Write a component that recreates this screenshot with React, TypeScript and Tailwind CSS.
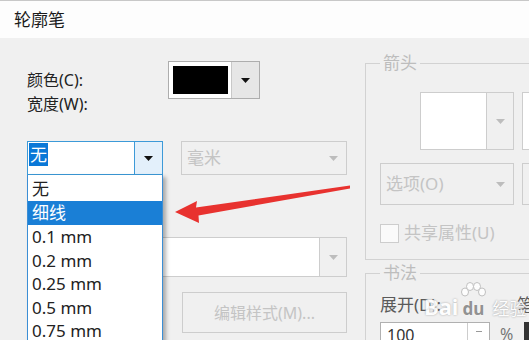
import React from 'react';

const font = '"Noto Sans", "Noto Sans CJK SC", sans-serif';

const Caret = ({ color }: { color: string }) => (
  <svg width="9" height="5" viewBox="0 0 9 5">
    <path d="M0 0h9L4.5 5z" fill={color} />
  </svg>
);

const widths = ['0.1 mm', '0.2 mm', '0.25 mm', '0.5 mm', '0.75 mm'];

function DisabledCombo({ label, className }: { label?: string; className: string }) {
  return (
    <div className={`flex items-center border border-[#cdcdcd] bg-[#f0f0f0] ${className}`}>
      <span className="flex-1 pl-[5px] text-[17px] text-[#c4c4c4]">{label}</span>
      <div className="flex w-[26px] justify-center">
        <Caret color="#bdbdbd" />
      </div>
    </div>
  );
}

function WhiteCombo({ className }: { className: string }) {
  return (
    <div className={`flex border border-[#cdcdcd] bg-white ${className}`}>
      <div className="flex-1" />
      <div className="flex w-[27px] items-center justify-center border-l border-[#cdcdcd] bg-[#f0f0f0]">
        <Caret color="#bdbdbd" />
      </div>
    </div>
  );
}

export default function App() {
  return (
    <div
      className="relative h-[340px] w-[529px] overflow-hidden bg-[#f0f0f0] text-[#222]"
      style={{ fontFamily: font }}
    >
      <div className="flex h-[38px] items-center border-t border-[#c8c8c8] bg-[#fdfdfd] pl-[14px] text-[17px] text-[#1a1a1a]">
        轮廓笔
      </div>

      <div className="flex pl-[27px] pt-[23px]">
        {/* left column */}
        <div className="w-[320px] shrink-0">
          <div className="flex h-[38px] items-center">
            <span className="w-[141px] text-[16px]">颜色(C):</span>
            <div className="flex h-[38px] w-[92px] border border-[#adadad] bg-white">
              <div className="flex-1 p-[4px] pr-[3px]">
                <div className="h-full w-full bg-black" />
              </div>
              <div className="flex w-[28px] items-center justify-center border-l border-[#c8c8c8] bg-[#e6e6e6]">
                <Caret color="#111" />
              </div>
            </div>
          </div>
          <div className="mt-[-6px] text-[16px] leading-[22px]">宽度(W):</div>

          <div className="mt-[26px] flex h-[34px] items-stretch gap-[18px]">
            <div className="relative w-[136px]">
              <div className="flex h-full border border-[#3c9ad8] bg-white">
                <div className="flex-1 p-[1px]">
                  <span className="inline-block h-[23px] bg-[#0a78d7] px-[1px] text-[17px] leading-[23px] text-white">
                    无
                  </span>
                </div>
                <div className="flex w-[28px] items-center justify-center border-l border-[#3c9ad8] bg-[#e3f0fb]">
                  <Caret color="#111" />
                </div>
              </div>
              {/* open list */}
              <div className="absolute left-0 top-full z-10 h-[180px] w-[136px] border-x border-[#3b8ed5] bg-white pt-[1px] text-[17px] shadow-[3px_2px_4px_rgba(0,0,0,0.3)]">
                <div className="h-[25px] pl-[4px] leading-[25px]">无</div>
                <div className="h-[24px] bg-[#1a7fd6] pl-[4px] leading-[24px] text-white">细线</div>
                {widths.map((w) => (
                  <div key={w} className="h-[23.5px] pl-[4px] leading-[23.5px]">
                    {w}
                  </div>
                ))}
              </div>
            </div>
            <DisabledCombo label="毫米" className="w-[166px]" />
          </div>

          <WhiteCombo className="mt-[62px] h-[40px] w-[320px]" />

          <div className="ml-[155px] mt-[15px] flex h-[41px] w-[165px] items-center justify-center border border-[#cdcdcd] text-[16px] text-[#c4c4c4]">
            编辑样式(M)...
          </div>
        </div>

        {/* right column */}
        <div className="-mt-[8px] ml-[18px] w-[200px] shrink-0">
          <fieldset className="border border-[#d2d2d2] pb-[16px] pl-[14px]">
            <legend className="px-[3px] text-[17px] leading-[20px] text-[#bdbdbd]">箭头</legend>
            <div className="ml-[40px] mt-[19px] flex h-[58px] gap-[8px]">
              <WhiteCombo className="h-full w-[94px]" />
              <div className="h-full w-[60px] border border-[#cdcdcd] bg-white" />
            </div>
            <div className="mt-[13px] flex h-[42px] gap-[8px]">
              <DisabledCombo label="选项(O)" className="h-full w-[134px]" />
              <div className="h-full w-[60px] border border-[#cdcdcd]" />
            </div>
            <div className="mt-[18px] flex h-[20px] items-center gap-[5px]">
              <div className="h-[19px] w-[19px] border border-[#cdcdcd] bg-[#fafafa]" />
              <span className="text-[17px] text-[#c4c4c4]">共享属性(U)</span>
            </div>
          </fieldset>

          <fieldset className="mt-[3px] border border-[#d2d2d2] pl-[14px]">
            <legend className="px-[3px] text-[17px] leading-[20px] text-[#bdbdbd]">书法</legend>
            <div className="mt-[11px] flex h-[22px] items-center text-[17px] text-[#5a5a5a]">
              <span className="w-[137px]">展开(D):</span>
              <span>笔</span>
            </div>
            <div className="mt-[6px] flex h-[30px] items-start">
              <div className="flex h-full w-[110px] border border-[#b0b0b0] bg-white">
                <span className="flex-1 pl-[6px] text-[16px] text-[#333]">100</span>
                <div className="flex w-[22px] justify-center border-l border-[#cdcdcd] pt-[8px]">
                  <div className="h-[1px] w-[6px] bg-[#999]" />
                </div>
              </div>
              <span className="ml-[10px] text-[16px] text-[#777]">%</span>
              <div className="ml-[11px] h-full w-[8px] bg-[#333]" />
            </div>
          </fieldset>
        </div>
      </div>

      {/* watermark */}
      <div className="pointer-events-none absolute left-[424px] top-[282px] z-10 flex items-end opacity-90">
        <span className="text-[22px] font-bold leading-none text-white [text-shadow:0_0_2px_#999]">Bai</span>
        <div className="flex flex-col items-center">
          <svg width="30" height="18" viewBox="0 0 30 18">
            <g fill="#fff" stroke="#bbb" strokeWidth="1">
              <ellipse cx="7" cy="10" rx="3.5" ry="4" />
              <ellipse cx="12" cy="4.5" rx="3.5" ry="4" />
              <ellipse cx="19" cy="4.5" rx="3.5" ry="4" />
              <ellipse cx="24" cy="10" rx="3.5" ry="4" />
            </g>
          </svg>
          <span className="text-[17px] font-bold leading-none text-[#888] [text-shadow:0_0_2px_#fff]">du</span>
        </div>
        <span className="ml-[4px] text-[17px] leading-none text-white [text-shadow:0_0_2px_#888]">经验</span>
      </div>

      {/* red arrow */}
      <svg className="pointer-events-none absolute left-0 top-0 z-20" width="529" height="340">
        <polygon
          points="175,212 197,201 196,207.5 350,185.5 350,188.5 198.5,215.5 199,223"
          fill="#e8322f"
        />
      </svg>
    </div>
  );
}
